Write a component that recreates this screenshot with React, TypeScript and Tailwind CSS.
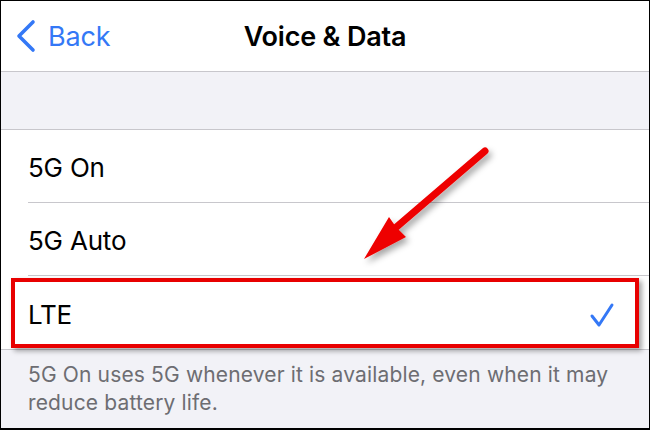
import React from 'react';

const rows = ['5G On', '5G Auto', 'LTE'];

const App: React.FC = () => {
  return (
    <div
      className="relative w-[650px] h-[430px] overflow-hidden bg-[#f2f2f7] border border-black border-b-2 text-black"
      style={{ fontFamily: 'Inter, "Liberation Sans", sans-serif' }}
    >
      {/* Nav bar */}
      <div className="relative h-[71px] bg-white border-b border-[#c8c7cc] flex items-center">
        <div className="flex items-center pl-[14px] text-[#3478f6]">
          <svg width="22" height="34" viewBox="0 0 22 34" fill="none">
            <path d="M18 3 L4 17 L18 31" stroke="currentColor" strokeWidth="3.6" strokeLinecap="round" strokeLinejoin="round" />
          </svg>
          <span className="ml-[11px] text-[27px] leading-none tracking-[-0.2px]">Back</span>
        </div>
        <div className="absolute inset-0 flex items-center justify-center pointer-events-none">
          <span className="text-[27px] font-semibold leading-none tracking-[-0.2px]">Voice &amp; Data</span>
        </div>
      </div>

      {/* Spacer band */}
      <div className="h-[58px] border-b border-[#c8c7cc]" />

      {/* List */}
      <div className="bg-white border-b border-[#c8c7cc]">
        {rows.map((r, i) => (
          <div key={r} className="pl-[27px]">
            <div
              className={`h-[73px] flex items-center justify-between pr-[36px] pt-[4px] ${
                i < rows.length - 1 ? 'border-b border-[#c8c7cc]' : ''
              }`}
            >
              <span className="text-[26px] leading-none tracking-[-0.2px]">{r}</span>
              {r === 'LTE' && (
                <svg width="26" height="26" viewBox="0 0 26 26" fill="none" className="mr-[-2px]">
                  <path d="M3 14 L10 23 L23 3" stroke="#3478f6" strokeWidth="3" strokeLinecap="round" strokeLinejoin="round" />
                </svg>
              )}
            </div>
          </div>
        ))}
      </div>

      {/* Footer */}
      <div className="px-[27px] pt-[11px] text-[21px] leading-[28px] text-[#6d6d72] tracking-[0.15px]">
        5G On uses 5G whenever it is available, even when it may reduce battery life.
      </div>

      {/* Annotation: red box */}
      <div className="absolute left-[10px] top-[277px] w-[628px] h-[70px] border-[4px] border-[#e80000] shadow-[3px_3px_5px_rgba(0,0,0,0.35)] pointer-events-none" />

      {/* Annotation: arrow */}
      <svg className="absolute inset-0 pointer-events-none" width="650" height="430" viewBox="0 0 650 430">
        <defs>
          <filter id="sh" x="-20%" y="-20%" width="140%" height="140%">
            <feDropShadow dx="3" dy="4" stdDeviation="3" floodColor="#000" floodOpacity="0.35" />
          </filter>
        </defs>
        <g filter="url(#sh)">
          <line x1="484" y1="150" x2="392" y2="229" stroke="#ee0000" strokeWidth="7" strokeLinecap="round" />
          <polygon points="363,258 388,216 395,226 405,236" fill="#ee0000" />
        </g>
      </svg>
    </div>
  );
};

export default App;
